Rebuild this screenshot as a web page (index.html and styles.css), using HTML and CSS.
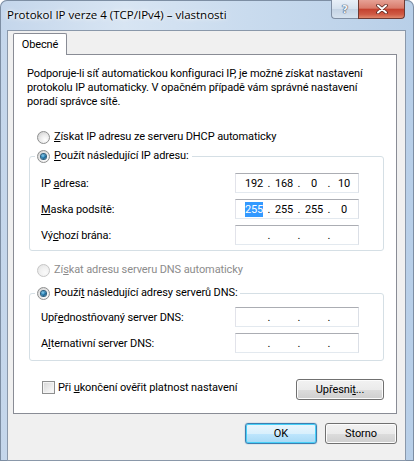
FILE: index.html
```html
<!DOCTYPE html>
<html>
<head>
	<meta charset="utf-8">
	<title>Protokol IP verze 4 (TCP/IPv4) – vlastnosti</title>
	<link rel="stylesheet" href="styles.css">
</head>
<body>
	<div class="window">

		<!-- titulek okna -->
		<div class="titlebar">
			<span class="title">Protokol IP verze 4 (TCP/IPv4) – vlastnosti</span>
			<div class="caption">
				<div class="cap-help">?</div>
				<div class="cap-close">
					<svg width="12" height="10" viewBox="0 0 12 10">
						<path d="M2 1.5 L10 8.5 M10 1.5 L2 8.5" stroke="#5a2620" stroke-width="3.6" stroke-linecap="round"/>
						<path d="M2 1.5 L10 8.5 M10 1.5 L2 8.5" stroke="#fff" stroke-width="2" stroke-linecap="round"/>
					</svg>
				</div>
			</div>
		</div>

		<div class="client">
			<!-- záložky -->
			<div class="tabs">
				<div class="tab active">Obecné</div>
			</div>

			<div class="panel">
				<p class="intro">Podporuje-li síť automatickou konfiguraci IP, je možné získat nastavení<br>protokolu IP automaticky. V opačném případě vám správné nastavení<br>poradí správce sítě.</p>

				<div class="option first"><span class="radio"></span><span><u>Z</u>ískat IP adresu ze serveru DHCP automaticky</span></div>

				<fieldset class="group ip">
					<legend class="option"><span class="radio on"></span><span><u>P</u>oužít následující IP adresu:</span></legend>
					<div class="row">
						<span>IP <u>a</u>dresa:</span>
						<div class="ipbox"><span>192</span><i>.</i><span>168</span><i>.</i><span>0</span><i>.</i><span>10</span></div>
					</div>
					<div class="row">
						<span><u>M</u>aska podsítě:</span>
						<div class="ipbox"><span><b class="sel">255</b></span><i>.</i><span>255</span><i>.</i><span>255</span><i>.</i><span>0</span></div>
					</div>
					<div class="row">
						<span>Vý<u>c</u>hozí brána:</span>
						<div class="ipbox"><span></span><i>.</i><span></span><i>.</i><span></span><i>.</i><span></span></div>
					</div>
				</fieldset>

				<div class="option disabled"><span class="radio"></span><span>Zí<u>s</u>kat adresu serveru DNS automaticky</span></div>

				<fieldset class="group dns">
					<legend class="option"><span class="radio on"></span><span>Použí<u>t</u> následující adresy serverů DNS:</span></legend>
					<div class="row">
						<span>Upř<u>e</u>dnostňovaný server DNS:</span>
						<div class="ipbox"><span></span><i>.</i><span></span><i>.</i><span></span><i>.</i><span></span></div>
					</div>
					<div class="row">
						<span>A<u>l</u>ternativní server DNS:</span>
						<div class="ipbox"><span></span><i>.</i><span></span><i>.</i><span></span><i>.</i><span></span></div>
					</div>
				</fieldset>

				<div class="panel-foot">
					<div class="check-row"><span class="check"></span><span>Při <u>u</u>končení ověřit platnost nastavení</span></div>
					<button class="btn advanced">Upřesni<u>t</u>...</button>
				</div>
			</div>

			<!-- tlačítka dialogu -->
			<div class="actions">
				<button class="btn default">OK</button>
				<button class="btn">Storno</button>
			</div>
		</div>
	</div>
</body>
</html>
```

FILE: styles.css
```css
* {
	margin: 0;
	padding: 0;
	box-sizing: border-box;
}

body {
	width: 414px;
	height: 461px;
	overflow: hidden;
	font-family: Roboto, "Open Sans", sans-serif;
	font-size: 11px;
	letter-spacing: -0.1px;
	color: #000;
	background: #fff;
}

u {
	text-decoration: underline;
	text-underline-offset: 1px;
}

/* okno */
.window {
	width: 414px;
	height: 461px;
	padding: 0 8px 3px 7px;
	border-radius: 7px 7px 0 0;
	background: linear-gradient(90deg, #c4d6eb 0%, #d8e5f3 30%, #c9dbee 60%, #b8cfe8 100%);
	box-shadow: inset 0 0 0 1px #7d8ea3;
}

.titlebar {
	height: 30px;
	display: flex;
	justify-content: space-between;
	align-items: flex-start;
}

.title {
	padding-top: 7px;
	font-family: "Open Sans", sans-serif;
	font-size: 11.5px;
	letter-spacing: 0;
	color: #000;
	text-shadow: 0 0 6px #fff, 0 0 3px #fff;
}

.caption {
	display: flex;
	margin-right: 1px;
}

.cap-help {
	width: 27px;
	height: 19px;
	border: 1px solid #7f8ea3;
	border-top: none;
	border-right: none;
	border-radius: 0 0 0 4px;
	background: linear-gradient(#e9f0f8 0%, #d5e1ee 50%, #c4d3e4 51%, #d6e2ef 100%);
	display: flex;
	justify-content: center;
	align-items: center;
	font-family: "DejaVu Sans", sans-serif;
	font-weight: bold;
	font-size: 11px;
	color: #f1f4f8;
	text-shadow: 0 0 1px #42546c, 0 0 1px #42546c, 0 0 1px #42546c;
}

.cap-close {
	width: 47px;
	height: 19px;
	border: 1px solid #6e3a33;
	border-top: none;
	border-radius: 0 0 4px 0;
	background: linear-gradient(#e6a195 0%, #d97b6b 45%, #c4422f 52%, #cf5a44 80%, #e0876c 100%);
	display: flex;
	justify-content: center;
	align-items: center;
}

/* klientská oblast */
.client {
	height: 431px;
	border: 1px solid #8a98aa;
	background: #f0f0f0;
	padding: 2px 0 0 5px;
}

.tabs {
	display: flex;
	position: relative;
	z-index: 1;
	margin-bottom: -1px;
}

.tab {
	width: 54px;
	height: 22px;
	border: 1px solid #898c95;
	border-bottom: none;
	border-radius: 2px 2px 0 0;
	background: #fff;
	display: flex;
	justify-content: center;
	align-items: center;
	padding-bottom: 1px;
}

.panel {
	margin-right: 8px;
	border: 1px solid #898c95;
	background: #fff;
	padding: 12px 12px 13px 13px;
}

.intro {
	line-height: 14px;
	white-space: nowrap;
}

/* přepínače */
.option {
	display: flex;
	align-items: center;
	height: 14px;
	line-height: 14px;
	gap: 4px;
}

.option.first {
	margin: 21px 0 0 10px;
}

.option.disabled {
	margin: 12px 0 0 10px;
	color: #8c8c8c;
}

.radio {
	width: 13px;
	height: 13px;
	border-radius: 50%;
	border: 1px solid #8e8f8f;
	background: radial-gradient(circle at 65% 70%, #ffffff 0%, #ececec 45%, #c8c8c8 100%);
	display: flex;
	justify-content: center;
	align-items: center;
	flex-shrink: 0;
}

.radio.on::after {
	content: "";
	width: 5px;
	height: 5px;
	border-radius: 50%;
	background: radial-gradient(circle at 40% 35%, #8fd3f3 0%, #1d74a8 50%, #0c3452 100%);
	box-shadow: 0 0 0 1px #2b5f80;
}

.option.disabled .radio {
	border-color: #c6c6c6;
	background: radial-gradient(circle at 65% 70%, #fafafa 0%, #f0f0f0 50%, #e0e0e0 100%);
}

/* skupiny */
.group {
	border: 1px solid #d5dfe5;
	border-radius: 3px;
	margin-left: 2px;
	padding: 10px 24px 5px 11px;
}

.group.ip {
	margin-top: 5px;
}

.group.dns {
	margin-top: 9px;
	padding-top: 7px;
	padding-bottom: 7px;
}

.group legend {
	margin-left: -6px;
	padding: 0 3px 0 2px;
}

.row {
	display: flex;
	justify-content: space-between;
	align-items: center;
	height: 20px;
}

.row + .row {
	margin-top: 6px;
}

.ipbox {
	width: 124px;
	height: 20px;
	border: 1px solid #e3e9ef;
	border-top-color: #abadb3;
	border-left-color: #e2e3ea;
	border-right-color: #dbdfe6;
	background: #fff;
	display: flex;
	align-items: center;
	padding-left: 5px;
}

.ipbox span {
	width: 26px;
	text-align: center;
}

.ipbox i {
	width: 4px;
	font-style: normal;
	text-align: center;
}

.sel {
	font-weight: normal;
	background: #3399ff;
	color: #fff;
	padding: 1px 0;
}

/* spodní část panelu */
.panel-foot {
	display: flex;
	justify-content: space-between;
	align-items: center;
	margin-top: 18px;
}

.check-row {
	display: flex;
	align-items: center;
	gap: 3px;
	margin-left: 15px;
	margin-bottom: 4px;
}

.check {
	width: 13px;
	height: 13px;
	border: 1px solid #8e8f8f;
	background: linear-gradient(135deg, #d6d6d6 0%, #f2f2f2 70%, #fafafa 100%);
	box-shadow: inset 0 0 0 1px #f4f4f4;
}

.btn {
	height: 21px;
	border: 1px solid #707070;
	border-radius: 3px;
	background: linear-gradient(#f2f2f2 0%, #ebebeb 50%, #dddddd 51%, #cfcfcf 100%);
	box-shadow: inset 0 0 0 1px #fcfcfc;
	font-family: inherit;
	font-size: 11px;
	letter-spacing: inherit;
	color: #000;
}

.btn.advanced {
	width: 88px;
}

.actions {
	display: flex;
	justify-content: flex-end;
	gap: 8px;
	margin-top: 9px;
	padding-right: 8px;
}

.actions .btn {
	width: 72px;
}

.btn.default {
	border-color: #3c7fb1;
	background: linear-gradient(#eaf6fd 0%, #d9f0fc 50%, #bee6fd 51%, #a7d9f5 100%);
	box-shadow: inset 0 0 0 1px #48d0f8, 0 0 1px #3c7fb1;
}
```
